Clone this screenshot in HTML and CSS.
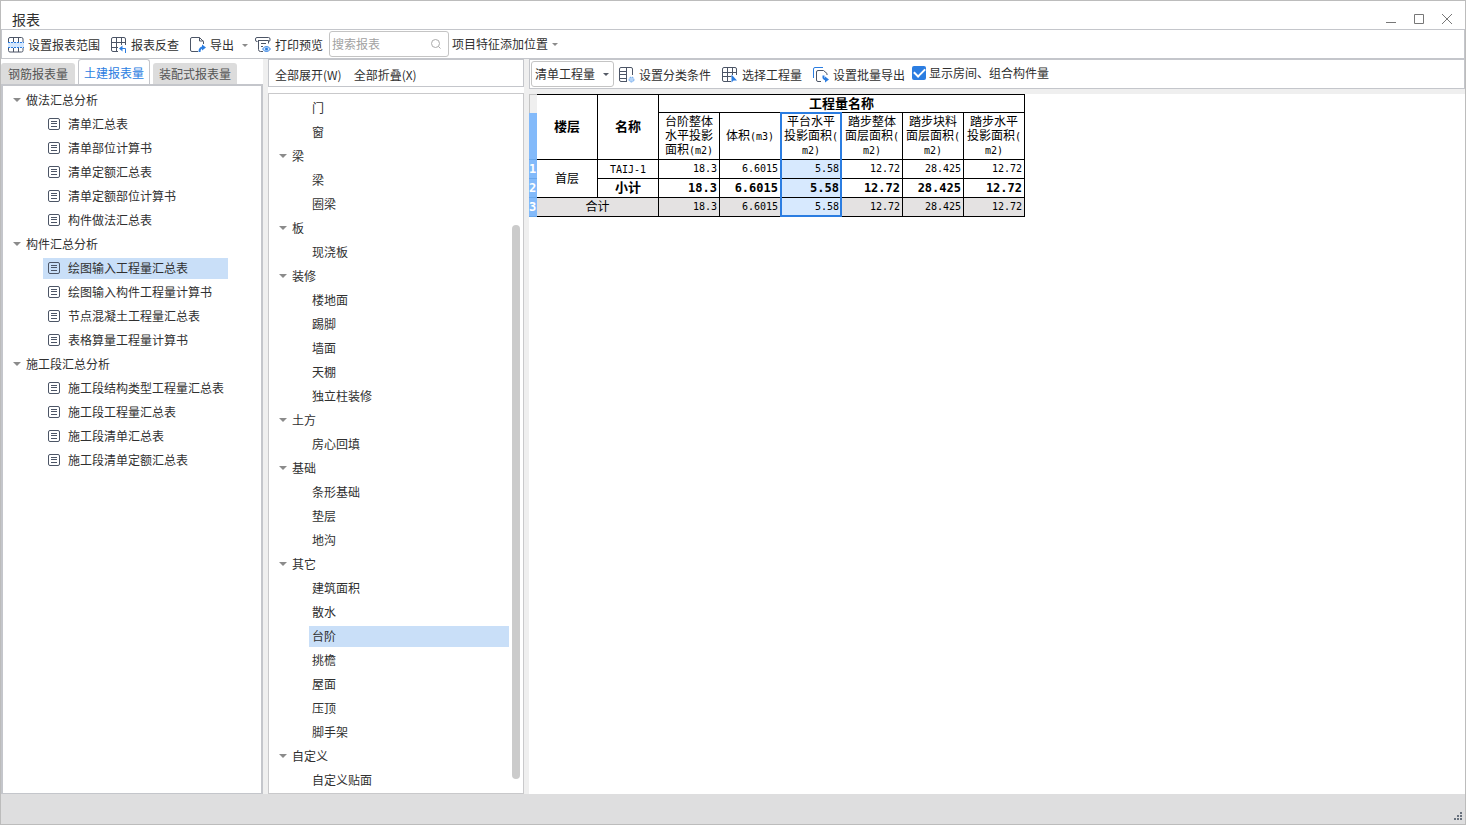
FILE: index.html
```html
<!DOCTYPE html>
<html lang="zh-CN">
<head>
<meta charset="utf-8">
<title>报表</title>
<link rel="stylesheet" href="styles.css">
</head>
<body>
<svg class="defs" aria-hidden="true">
  <symbol id="doc" viewBox="0 0 12 12"><rect x=".5" y=".5" width="11" height="11" rx="1.5"/><path d="M3 3.500h6M3 5.500h6M3 8.500h6"/></symbol>
</svg>
<div class="window">
  <header class="titlebar">
    <h1>报表</h1>
    <div class="window-buttons">
      <button aria-label="最小化"><svg viewBox="0 0 12 12"><path d="M1 9.500h10"/></svg></button>
      <button aria-label="最大化"><svg viewBox="0 0 12 12"><path d="M1.500 1.500h9v9h-9z"/></svg></button>
      <button aria-label="关闭"><svg viewBox="0 0 12 12"><path d="M1 1l10 10M11 1L1 11"/></svg></button>
    </div>
  </header>

  <div class="toolbar main-tools">
    <button class="tool"><svg class="icon" viewBox="0 0 16 16"><path class="wash" d="M0 5h16v6H0z"/><path d="M.5 5V2Q.5.5 2 .5h11.500Q15 .5 15 2v3M.5 11v2.500Q.5 15 2 15h11.500q1.500 0 1.500-1.500V11M5.500.5V5M10.500.5V5M5.500 11v4M10.500 11v4"/><path class="blue dash" d="M0 5.500h16M0 10.500h16"/></svg>设置报表范围</button>
    <button class="tool"><svg class="icon" viewBox="0 0 16 16"><path d="M7 14.500H2Q.5 14.500.5 13V2Q.5.5 2 .5h11q1.500 0 1.500 1.500v6M5.500.5v14M10.500.5V8M.5 5.500h14M.5 10.500H7"/><path class="blue" d="M14.500 16v-4.500H10"/><path class="fill" d="M8 11.500L11.500 8.500v6z"/></svg>报表反查</button>
    <button class="tool export"><svg class="icon" viewBox="0 0 16 16"><path d="M8 14.500H2Q.5 14.500.5 13V2Q.5.5 2 .5h7.500l4 4V7M9.500.5V4h4"/><path class="blue thick" d="M9.500 15q0-4.500 3.500-4.500"/><path class="fill" d="M12 7.500l4 3-4 3z"/></svg>导出<span class="caret"></span></button>
    <button class="tool"><svg class="icon" viewBox="0 0 16 16"><path d="M2.500 4.500H2Q.5 4.500.5 3V2Q.5.5 2 .5h11.500Q15 .5 15 2v1q0 1.500-1.500 1.500M3 3.500h10.500v3M3.500 3.500v9q0 2 2 2H8M6 6.500h5M6 9.500h2"/><path class="blue wash" d="M7.500 12q4-5 8 0-4 5-8 0z"/><circle class="fill" cx="11.500" cy="12" r="1.500"/></svg>打印预览</button>
    <label class="search"><input type="text" placeholder="搜索报表" aria-label="搜索报表"><svg viewBox="0 0 12 12"><circle cx="5.500" cy="5.500" r="4"/><path d="M8.500 8.500l2 2"/></svg></label>
    <button class="tool feature">项目特征添加位置<span class="caret"></span></button>
  </div>

  <main class="workspace">
    <section class="reports">
      <div class="tabs" role="tablist">
        <button role="tab" aria-selected="false">钢筋报表量</button>
        <button role="tab" aria-selected="true">土建报表量</button>
        <button role="tab" aria-selected="false">装配式报表量</button>
      </div>
      <nav class="tree report-tree">
        <button class="group">做法汇总分析</button>
        <a href="#"><svg><use href="#doc"/></svg>清单汇总表</a>
        <a href="#"><svg><use href="#doc"/></svg>清单部位计算书</a>
        <a href="#"><svg><use href="#doc"/></svg>清单定额汇总表</a>
        <a href="#"><svg><use href="#doc"/></svg>清单定额部位计算书</a>
        <a href="#"><svg><use href="#doc"/></svg>构件做法汇总表</a>
        <button class="group">构件汇总分析</button>
        <a href="#" class="current"><svg><use href="#doc"/></svg>绘图输入工程量汇总表</a>
        <a href="#"><svg><use href="#doc"/></svg>绘图输入构件工程量计算书</a>
        <a href="#"><svg><use href="#doc"/></svg>节点混凝土工程量汇总表</a>
        <a href="#"><svg><use href="#doc"/></svg>表格算量工程量计算书</a>
        <button class="group">施工段汇总分析</button>
        <a href="#"><svg><use href="#doc"/></svg>施工段结构类型工程量汇总表</a>
        <a href="#"><svg><use href="#doc"/></svg>施工段工程量汇总表</a>
        <a href="#"><svg><use href="#doc"/></svg>施工段清单汇总表</a>
        <a href="#"><svg><use href="#doc"/></svg>施工段清单定额汇总表</a>
      </nav>
    </section>

    <section class="members">
      <div class="member-tools"><button>全部展开(W)</button><button>全部折叠(X)</button></div>
      <div class="member-panel">
        <nav class="tree member-tree">
          <a href="#">门</a>
          <a href="#">窗</a>
          <button class="group">梁</button>
          <a href="#">梁</a>
          <a href="#">圈梁</a>
          <button class="group">板</button>
          <a href="#">现浇板</a>
          <button class="group">装修</button>
          <a href="#">楼地面</a>
          <a href="#">踢脚</a>
          <a href="#">墙面</a>
          <a href="#">天棚</a>
          <a href="#">独立柱装修</a>
          <button class="group">土方</button>
          <a href="#">房心回填</a>
          <button class="group">基础</button>
          <a href="#">条形基础</a>
          <a href="#">垫层</a>
          <a href="#">地沟</a>
          <button class="group">其它</button>
          <a href="#">建筑面积</a>
          <a href="#">散水</a>
          <a href="#" class="current">台阶</a>
          <a href="#">挑檐</a>
          <a href="#">屋面</a>
          <a href="#">压顶</a>
          <a href="#">脚手架</a>
          <button class="group">自定义</button>
          <a href="#">自定义贴面</a>
        </nav>
        <div class="scrollbar"><span></span></div>
      </div>
    </section>

    <section class="sheet">
      <div class="toolbar sheet-tools">
        <span class="select"><select aria-label="工程量类型"><option>清单工程量</option></select><span class="caret dark"></span></span>
        <button class="tool"><svg class="icon" viewBox="0 0 16 16"><path d="M8 14.500H2Q.5 14.500.5 13V2Q.5.5 2 .5h10q1.500 0 1.500 1.500v6M7.500.5v14M.5 4.500h7M.5 7.500h7M.5 11.500h7"/><circle class="flower" cx="12.500" cy="12.500" r="2.500"/></svg>设置分类条件</button>
        <button class="tool"><svg class="icon" viewBox="0 0 16 16"><path d="M9 14.500H2Q.5 14.500.5 13V2Q.5.5 2 .5h11q1.500 0 1.500 1.500v6M5.500.5v14M10.500.5V8M.5 5.500h14M.5 9.500h9"/><path class="fill" d="M9.500 7.500v8l2-2h3.500z"/></svg>选择工程量</button>
        <button class="tool"><svg class="icon" viewBox="0 0 16 16"><path class="blue" d="M.5 11V2Q.5.5 2 .5h8"/><path d="M8 14.500H5Q3.500 14.500 3.500 13V5Q3.500 3.500 5 3.500h5.500l3.500 3V8"/><path class="blue thick" d="M10.500 8.500q-.5 4 2.500 4"/><path class="fill" d="M12 9.500l4 3-4 3z"/></svg>设置批量导出</button>
        <label class="check"><input type="checkbox" checked>显示房间、组合构件量</label>
      </div>
      <div class="sheet-body">
        <table>
          <colgroup><col class="gutter-col"><col span="8"></colgroup>
          <thead>
            <tr><td class="gutter corner"></td><th rowspan="2">楼层</th><th rowspan="2">名称</th><th colspan="6">工程量名称</th></tr>
            <tr class="names"><td class="gutter"></td><td>台阶整体<br>水平投影<br>面积<i>(m2)</i></td><td>体积<i>(m3)</i></td><td class="picked first">平台水平<br>投影面积<i>(</i><br><i>m2)</i></td><td>踏步整体<br>面层面积<i>(</i><br><i>m2)</i></td><td>踏步块料<br>面层面积<i>(</i><br><i>m2)</i></td><td>踏步水平<br>投影面积<i>(</i><br><i>m2)</i></td></tr>
          </thead>
          <tbody>
            <tr><th class="gutter">1</th><td class="name" rowspan="2">首层</td><td class="name"><i>TAIJ-1</i></td><td>18.3</td><td>6.6015</td><td class="picked">5.58</td><td>12.72</td><td>28.425</td><td>12.72</td></tr>
            <tr class="subtotal"><th class="gutter">2</th><td class="name">小计</td><td>18.3</td><td>6.6015</td><td class="picked">5.58</td><td>12.72</td><td>28.425</td><td>12.72</td></tr>
            <tr class="total"><th class="gutter">3</th><td class="name" colspan="2">合计</td><td>18.3</td><td>6.6015</td><td class="picked last">5.58</td><td>12.72</td><td>28.425</td><td>12.72</td></tr>
          </tbody>
        </table>
      </div>
    </section>
  </main>

  <footer class="statusbar"><svg viewBox="0 0 10 10"><path d="M7 0h2v2H7zM4 3h2v2H4zM7 3h2v2H7zM1 6h2v2H1zM4 6h2v2H4zM7 6h2v2H7z"/></svg></footer>
</div>
</body>
</html>
```
FILE: styles.css
```css
* { box-sizing: border-box; }

body {
  margin: 0;
  font: 12px/18px "Noto Sans CJK SC", sans-serif;
  color: #303030;
  background: #fff;
}

button {
  margin: 0;
  padding: 0;
  border: 0;
  background: none;
  font: inherit;
  color: inherit;
  white-space: nowrap;
}

.defs { position: absolute; width: 0; height: 0; }

.window {
  display: flex;
  flex-direction: column;
  min-height: 100vh;
  border: 1px solid #bcbcbc;
}

.titlebar {
  display: flex;
  justify-content: space-between;
  align-items: flex-end;
  height: 28px;
  padding: 0 12px 0 11px;
}
.titlebar h1 { margin: 0; font-size: 14px; line-height: 20px; font-weight: 400; }
.window-buttons { display: flex; gap: 16px; padding-bottom: 4px; }
.window-buttons button { width: 12px; height: 12px; }
.window-buttons svg { display: block; width: 12px; height: 12px; fill: none; stroke: #777; }

.toolbar {
  display: flex;
  align-items: center;
  height: 30px;
  border: 1px solid #c4c6cb;
}
.main-tools { gap: 11px; padding-left: 6px; }
.tool { display: flex; align-items: center; gap: 4px; height: 28px; padding-top: 2px; }
.icon { width: 16px; height: 16px; fill: none; stroke: #4c5566; }
.icon .blue { stroke: #2b7de1; }
.icon .wash { fill: #d4e7fd; }
.icon path.wash:not(.blue) { stroke: none; }
.icon .fill { fill: #2b7de1; stroke: none; }
.icon .dash { stroke-dasharray: 2 1; }
.icon .thick { stroke-width: 2; }
.icon .flower { fill: #b5d4f8; stroke: #6fa9ee; stroke-dasharray: 2 1; }
.caret {
  border: 3px solid transparent;
  border-top-color: #8b8b8b;
  border-bottom: 0;
}
.caret.dark { border-top-color: #555b66; }
.export { margin-right: -4px; }
.export .caret { margin-left: 4px; }
.feature { margin-left: -8px; padding-top: 0; }
.search {
  display: flex;
  align-items: center;
  width: 120px;
  height: 26px;
  margin-left: -5px;
  padding: 0 6px 0 2px;
  border: 1px solid #c4c4c4;
  border-radius: 3px;
}
.search input { flex: 1; min-width: 0; padding: 0; border: 0; outline: 0; font: inherit; background: none; }
.search input::placeholder { color: #a2a2a2; }
.search svg { width: 12px; height: 12px; fill: none; stroke: #aaa; }

.workspace {
  flex: 1;
  display: grid;
  grid-template-columns: 262px 256px 1fr;
  gap: 5px;
  background: #efefef;
}
.reports, .members { display: flex; flex-direction: column; background: #fff; }

.tabs { display: flex; align-items: flex-end; gap: 3px; height: 25px; }
.tabs button {
  height: 21px;
  padding: 0 7px;
  border-radius: 3px 3px 0 0;
  background: #dcdcdc;
  color: #555;
}
.tabs button:last-child { padding: 0 6px; }
.tabs [aria-selected="true"] {
  height: 27px;
  margin-bottom: -2px;
  padding: 0 5px;
  border: 1px solid #c4c6cb;
  border-bottom: 0;
  background: #fff;
  color: #2b7de1;
}

.tree { display: flex; flex-direction: column; padding-top: 2px; }
.tree a, .group { display: flex; align-items: center; height: 24px; color: inherit; text-decoration: none; }
.tree a { height: 21px; margin-top: 2px; margin-bottom: 1px; padding-bottom: 1px; white-space: nowrap; }
.tree .current { background: #c9dff8; }
.group { gap: 5px; padding-left: 10px; }
.group::before {
  content: "";
  border: 4px solid transparent;
  border-top-color: #8b8b8b;
  border-bottom: 0;
}
.report-tree { flex: 1; border: 2px solid #c4c6cb; border-bottom-width: 1px; }
.report-tree a { gap: 8px; margin-left: 40px; margin-right: 33px; padding-left: 5px; }
.report-tree svg { flex: none; width: 12px; height: 12px; fill: none; stroke: #4c5566; }

.member-tools {
  display: flex;
  align-items: center;
  gap: 12px;
  height: 28px;
  margin-bottom: 6px;
  padding: 4px 6px 0;
  border: 1px solid #c4c6cb;
}
.member-panel { flex: 1; display: flex; padding-right: 3px; border: 1px solid #c9c9cb; }
.member-tree { flex: 1; }
.member-tree a { margin-left: 40px; margin-right: 3px; padding-left: 3px; }
.scrollbar { display: grid; grid-template-rows: 131fr 554fr 14fr; width: 8px; }
.scrollbar span { grid-row: 2; border-radius: 4px; background: #cbcbcb; }

.sheet { display: flex; flex-direction: column; min-width: 0; }
.sheet-tools { gap: 11px; padding-left: 1px; background: #fff; }
.select { position: relative; margin-right: -6px; }
.select select {
  display: block;
  width: 83px;
  height: 26px;
  padding: 0 3px;
  border: 1px solid #c4c4c4;
  border-radius: 3px;
  background: #fff;
  font: inherit;
  color: inherit;
  appearance: none;
}
.select .caret { position: absolute; right: 5px; top: 12px; pointer-events: none; }
.check { display: flex; align-items: center; gap: 3px; margin-left: -4px; padding-bottom: 2px; }
.check input {
  display: grid;
  place-items: center;
  width: 14px;
  height: 14px;
  margin: 0;
  border-radius: 2px;
  background: #2b7de1;
  appearance: none;
}
.check input:checked::before {
  content: "";
  width: 9px;
  height: 5px;
  margin-bottom: 3px;
  border: solid #fff;
  border-width: 0 0 2px 2px;
  transform: rotate(-45deg);
}
.sheet-body { flex: 1; margin-top: 5px; background: #fff; }

table {
  table-layout: fixed;
  width: 496px;
  border-spacing: 0;
  font-family: "DejaVu Sans Mono", "Noto Sans CJK SC", monospace;
  color: #000;
}
col { width: 61px; }
.gutter-col { width: 8px; }
th, td {
  height: 19px;
  padding: 0;
  border: solid #000;
  border-width: 0 1px 1px 0;
  line-height: 14px;
  text-align: center;
}
th { font-size: 13px; }
thead tr:first-child th { border-top-width: 1px; }
.names td { height: 47px; white-space: nowrap; }
td i { font-size: 10px; font-style: normal; line-height: 10px; }
tbody td { padding-right: 2px; font-size: 10px; text-align: right; }
tbody .name { padding: 0; font-size: 12px; text-align: center; }
.subtotal td { font-size: 12px; font-weight: 700; }
.subtotal .name { font-size: 13px; }
.total td { background: #e4e2e2; }
.gutter {
  overflow: hidden;
  border: 0;
  border-bottom: 1px solid #6aa7ea;
  background: #83bafa;
  color: #fff;
  font-size: 12px;
  text-align: left;
}
td.corner { border: 1px solid #c4c4c4; border-width: 1px 0 0 1px; background: #efefef; }
td.picked { position: relative; }
tbody td.picked { background: #d7e9fe; }
.picked::after {
  content: "";
  position: absolute;
  inset: -1px;
  border: solid #2b7de1;
  border-width: 0 2px;
}
.picked.first::after { border-top-width: 2px; }
.picked.last::after { border-bottom-width: 2px; }

.statusbar {
  display: flex;
  justify-content: flex-end;
  align-items: flex-end;
  height: 30px;
  padding: 2px;
  background: #dededf;
}
.statusbar svg { width: 10px; height: 10px; fill: #68717d; }
```
